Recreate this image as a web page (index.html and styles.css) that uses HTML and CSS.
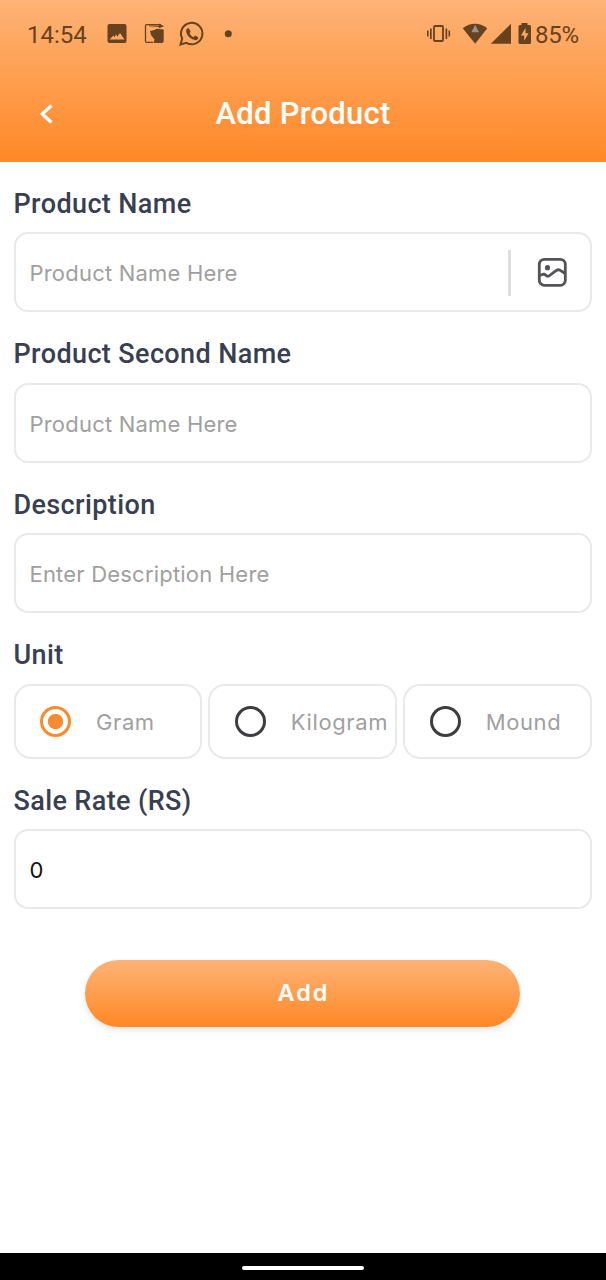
FILE: index.html
```
<!DOCTYPE html>
<html lang="en">
<head>
<meta charset="utf-8">
<title>Add Product</title>
<link rel="stylesheet" href="styles.css">
</head>
<body>
<div class="screen">
  <header class="header">
    <div class="status">
      <span class="clock">14:54</span>
      <svg class="notices" width="140" height="32" viewBox="0 0 140 32" fill="#67421f">
        <path fill-rule="evenodd" d="M5.500 6H20.500Q22.500 6 22.500 8V23Q22.500 25 20.500 25H5.500Q3.500 25 3.500 23V8Q3.500 6 5.500 6ZM5.500 21.500H20.500L16 15L13.500 18.500L12 16.500L10.500 19.300L9.500 17.500Z"/>
        <path d="M57 6.700H42.500Q41.500 6.700 41.500 7.700V23.300Q41.500 24.300 42.500 24.300H49" fill="none" stroke="#67421f" stroke-width="1.300"/>
        <path d="M55 5.500L60 8.300L55 10.300V8.900L45 8.300V7.500L55 7.700ZM46 13L50.500 12L52.500 10.800L59.700 11.500V23Q59.700 25 57.700 25H49.500L50.500 21.500L47 17Z"/>
        <path d="M76.500 26.500L78.200 20.500A10.700 10.700 0 1 1 82.300 24.800Z" fill="none" stroke="#67421f" stroke-width="2"/>
        <path d="M82.400 11.200Q83.700 9.800 85 10.500L86.600 13.700L85.600 15.500Q87 18 89.500 19.200L91.200 17.500L94.300 19.200Q94.300 21.800 91.500 22.200Q88.500 22.200 85 19Q81.300 15 82.400 11.200Z"/>
        <circle cx="124.300" cy="15.700" r="3.500"/>
      </svg>
      <svg class="signals" width="110" height="32" viewBox="0 0 110 32" fill="#67421f">
        <rect x="8" y="8" width="9" height="15" rx="1" fill="none" stroke="#67421f" stroke-width="1.800"/>
        <path d="M4 10.500h1.700v10.500H4zM1 12.500h1.600v6H1zM19.500 10.500h1.700v10.500h-1.700zM22.500 12.500h1.600v6h-1.600z"/>
        <path d="M36.700 10.200Q49 1.500 61.300 10.200L49.200 25.800Z"/>
        <path d="M49.200 6.800L53 14.300H45.400Z" fill="#96918c"/>
        <path d="M85 5.800V25.800H64.800Z"/>
        <path fill-rule="evenodd" d="M95.500 5H101.500V7H103.500Q105 7 105 8.500V24.500Q105 26 103.500 26H94Q92.500 26 92.500 24.500V8.500Q92.500 7 94 7H95.500ZM99.500 10L95 17.500H98.200V22.800L102.500 15.300H99.500Z"/>
      </svg>
      <span class="battery">85%</span>
    </div>
    <div class="appbar">
      <svg class="back" width="20" height="24" viewBox="0 0 20 24"><path d="M15.500 3.500L6.200 12L15.500 20.500" fill="none" stroke="#fff" stroke-width="3.300"/></svg>
      <h1 class="title">Add Product</h1>
    </div>
  </header>
  <main class="form">
    <label class="label">Product Name</label>
    <div class="field">
      <span class="hint">Product Name Here</span>
      <span class="divider"></span>
      <svg class="picture" width="32" height="32" viewBox="0 0 32 32" fill="none" stroke="#535358" stroke-width="2.800">
        <rect x="3.300" y="2.300" width="26" height="26" rx="5"/>
        <path d="M3.500 18.500L7 17.300Q8.500 17 9.800 18.200Q11.800 20.300 14 18.200L20 13.700Q22 12 24 13.200L29 16.500"/>
        <circle cx="11.500" cy="10.700" r="2.600" fill="#535358" stroke="none"/>
      </svg>
    </div>
    <label class="label">Product Second Name</label>
    <div class="field"><span class="hint">Product Name Here</span></div>
    <label class="label">Description</label>
    <div class="field"><span class="hint">Enter Description Here</span></div>
    <label class="label">Unit</label>
    <div class="units">
      <div class="unit"><span class="radio checked"></span><span class="hint">Gram</span></div>
      <div class="unit"><span class="radio"></span><span class="hint">Kilogram</span></div>
      <div class="unit"><span class="radio"></span><span class="hint">Mound</span></div>
    </div>
    <label class="label">Sale Rate (RS)</label>
    <div class="field"><span class="value">0</span></div>
    <button class="add">Add</button>
  </main>
  <footer class="navbar"><span class="pill"></span></footer>
</div>
</body>
</html>
```
FILE: styles.css
```
* { box-sizing: border-box; }
body { margin: 0; background: #fff; font-family: Roboto, sans-serif; }
.screen { width: 606px; height: 1280px; display: flex; flex-direction: column; overflow: hidden; }
.header { height: 161.5px; flex: none; background: linear-gradient(#fdb377, #ff8826); }
.status { height: 68px; display: flex; align-items: center; padding: 0 27px; color: #67421f; font-size: 24px; }
.clock { width: 61px; padding-top: 2px; }
.notices { margin-left: 16px; }
.signals { margin-left: auto; }
.battery { width: 44px; margin-left: -1px; padding-top: 2px; white-space: nowrap; letter-spacing: -0.3px; }
.appbar { height: 91px; display: grid; grid-template-columns: 60px 1fr 60px; align-items: center; }
.back { margin-left: 36px; margin-top: 1px; }
.title { margin: 0; text-align: center; color: #fff; font-size: 31px; font-weight: 500; letter-spacing: 0.25px; }
.form { flex: 1; display: flex; flex-direction: column; padding: 0 14px 0 13.5px; }
.label { height: 36px; margin: 23.5px 0 11px 0; padding-top: 0.5px; line-height: 36px; font-size: 27px; font-weight: 500; letter-spacing: 0.38px; color: #383f50; }
.field { height: 80px; border: 2px solid #e9e9e9; border-radius: 14px; display: flex; align-items: center; padding: 2px 22px 0 14px; }
.hint, .value { font-family: Inter, sans-serif; font-size: 22px; font-weight: 400; letter-spacing: 0.2px; color: #a0a0a0; white-space: nowrap; }
.value { color: #111; }
.divider { width: 3px; height: 46px; margin-left: auto; background: #dedede; }
.picture { margin-left: 25px; }
.units { display: grid; grid-template-columns: repeat(3, 1fr); gap: 6px; height: 75px; }
.unit { border: 2px solid #e9e9e9; border-radius: 17px; display: flex; align-items: center; padding-left: 24.5px; gap: 25px; }
.unit .hint { letter-spacing: 0.6px; padding-top: 1px; }
.radio { flex: none; width: 31px; height: 31px; border: 3px solid #3c3c41; border-radius: 50%; }
.checked { border-color: #f98b2c; background: radial-gradient(circle, #f98b2c 7.2px, #fff 8px); }
.add { width: 435px; height: 67px; margin: 51px 0 0 71.5px; padding: 0 0 2px 2px; border: 0; border-radius: 34px; background: linear-gradient(#fdb377, #ff8826); box-shadow: 0 3px 6px rgba(0, 0, 0, 0.1); color: #fff; font: 600 23.5px Inter, sans-serif; letter-spacing: 2px; }
.navbar { height: 27px; background: #000; display: flex; justify-content: center; padding-top: 13px; }
.pill { width: 122px; height: 4px; border-radius: 2px; background: #fff; }
```
